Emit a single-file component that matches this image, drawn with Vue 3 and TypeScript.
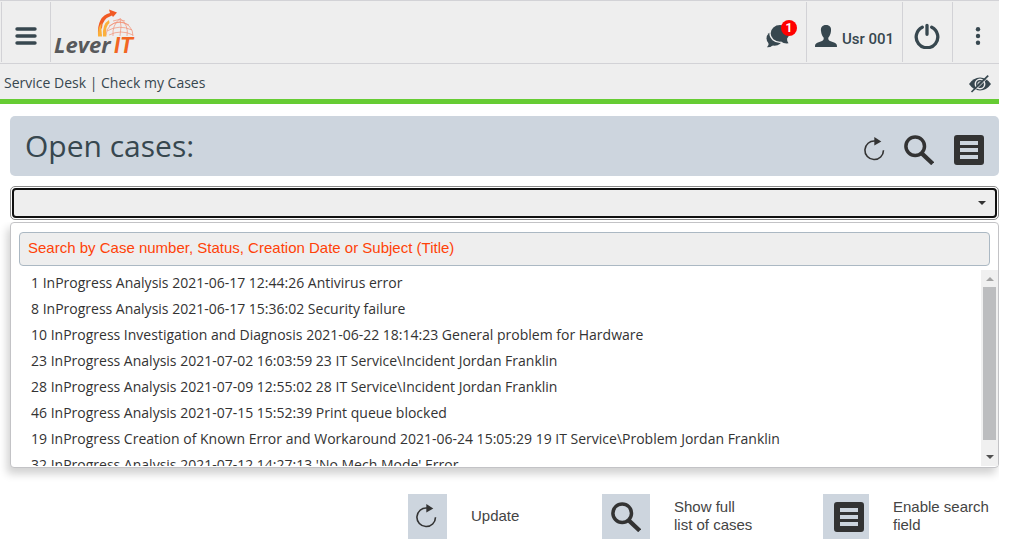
<script setup lang="ts">
import { ref } from 'vue'

interface Case {
  id: number
  text: string
}

const query = ref('')
const selected = ref('')
const cases: Case[] = [
  { id: 1, text: 'InProgress Analysis 2021-06-17 12:44:26 Antivirus error' },
  { id: 8, text: 'InProgress Analysis 2021-06-17 15:36:02 Security failure' },
  { id: 10, text: 'InProgress Investigation and Diagnosis 2021-06-22 18:14:23 General problem for Hardware' },
  { id: 23, text: 'InProgress Analysis 2021-07-02 16:03:59 23 IT Service\\Incident Jordan Franklin' },
  { id: 28, text: 'InProgress Analysis 2021-07-09 12:55:02 28 IT Service\\Incident Jordan Franklin' },
  { id: 46, text: 'InProgress Analysis 2021-07-15 15:52:39 Print queue blocked' },
  { id: 19, text: 'InProgress Creation of Known Error and Workaround 2021-06-24 15:05:29 19 IT Service\\Problem Jordan Franklin' },
  { id: 32, text: "InProgress Analysis 2021-07-12 14:27:13 'No Mech Mode' Error" },
]
</script>

<template>
  <svg class="defs" aria-hidden="true">
    <symbol id="i-refresh" viewBox="0 0 30 30">
      <path d="M24.5 15.3A9.3 9.3 0 1 1 16 6" fill="none" stroke="#333" stroke-width="1.6" />
      <path d="M15.3 2v8.4L22.3 6.4z" fill="#333" />
    </symbol>
    <symbol id="i-search" viewBox="0 0 30 30">
      <circle cx="11.2" cy="11.2" r="9.3" fill="none" stroke="#333" stroke-width="3.5" />
      <path d="M18 18.6L28.7 28.7" stroke="#333" stroke-width="4.2" />
    </symbol>
    <symbol id="i-list" viewBox="0 0 30 30">
      <path fill-rule="evenodd" fill="#333" d="M3 0h24a3 3 0 0 1 3 3v24a3 3 0 0 1-3 3H3a3 3 0 0 1-3-3V3a3 3 0 0 1 3-3zM6 6v4h18V6zM6 13v4h18v-4zM6 20v4h18v-4z" />
    </symbol>
  </svg>

  <div class="page">
    <header class="top">
      <button class="cell menu" aria-label="Menu">
        <svg width="22" height="18" viewBox="0 0 22 18"><path d="M2 2h18M2 9h18M2 16h18" stroke="#37474f" stroke-width="3.4" stroke-linecap="round" /></svg>
      </button>
      <a class="logo" href="#" aria-label="LeverIT">
        <svg width="90" height="54" viewBox="0 0 90 54">
          <g fill="none" stroke="#f28f74" stroke-width="0.7">
            <path d="M53 27A13.500 13.500 0 1 1 80 28M54 23Q66 16 79 22M56 18Q66 11 76 17M60 13Q66 10 72 13" />
            <path d="M60 28Q59 17 67 10.500M67 28Q69 18 67 10.500M74 28Q76 17 67 10.500M56 27Q68 21 80 27" />
          </g>
          <path d="M45 27.500Q44 8 57 5l-1-3.500L64 4.500 60 9 59 7.500Q49 11 49 20L47 22 48.500 27.500z" fill="#f15a24" />
          <path d="M45 28.500Q44.500 20 48.500 15 48 21 49 28.500z" fill="#fbb03b" />
          <path d="M50 28.500Q49 16 56 12l.5 3Q51.500 19 53.500 28.500z" fill="#fbb03b" />
          <text x="1" y="45" class="lever">Lever</text>
          <text x="61" y="45" class="it">IT</text>
        </svg>
      </a>
      <span class="spacer"></span>
      <button class="cell chat" aria-label="Messages">
        <svg width="26" height="24" viewBox="0 0 26 24" fill="#37474f">
          <ellipse cx="8.500" cy="14.500" rx="8" ry="7.300" />
          <path d="M3 17Q3 21 1 23.300 5 23.500 8 20.500z" />
          <ellipse cx="14" cy="9.300" rx="10" ry="9" stroke="#eee" stroke-width="1.300" />
          <path d="M15 17.500Q18 20 22.500 19.300 20.800 17.500 21 14z" />
        </svg>
        <span class="badge">1</span>
      </button>
      <button class="cell user">
        <svg width="22" height="22" viewBox="0 0 22 22" fill="#37474f"><path d="M11 0C14.800 0 16.500 2.400 16 6c-.3 3.400-1.500 5.200-2.600 6.600-.5 2 .4 2.800 1.600 3.400l4.700 1.800C21.500 18.600 22 19.500 22 22H0c0-2.500.5-3.400 2.300-4.200L7 16c1.200-.6 2.100-1.400 1.600-3.400C7.500 11.200 6.300 9.400 6 6 5.500 2.400 7.200 0 11 0z" /></svg>
        <span>Usr 001</span>
      </button>
      <button class="cell power" aria-label="Log out">
        <svg width="26" height="26" viewBox="0 0 26 26" fill="none" stroke="#37474f" stroke-width="3.300" stroke-linecap="round"><path d="M8.300 4.200A10.800 10.800 0 1 0 17.700 4.200M13 2.300v9" /></svg>
      </button>
      <button class="cell more" aria-label="More">
        <svg width="6" height="18" viewBox="0 0 6 18" fill="#37474f"><circle cx="3" cy="2.300" r="2.200" /><circle cx="3" cy="9" r="2.200" /><circle cx="3" cy="15.700" r="2.200" /></svg>
      </button>
    </header>

    <nav class="crumbs">
      <span>Service Desk | Check my Cases</span>
      <button class="plain" aria-label="Toggle visibility">
        <svg width="22" height="18" viewBox="0 0 22 18">
          <path d="M0 9Q4.500 2.500 11 2.500T22 9Q17.500 15.500 11 15.500T0 9z" fill="#37474f" />
          <circle cx="11" cy="9" r="4.700" fill="none" stroke="#eee" stroke-width="1.500" />
          <path d="M8.800 9.500A2.500 2.500 0 0 1 11.500 6.800" fill="none" stroke="#eee" stroke-width="1" />
          <path d="M3.700 17.600L20.500 1.200" stroke="#eee" stroke-width="1" />
          <path d="M2.500 17L19.200 .7" stroke="#37474f" stroke-width="1.700" />
        </svg>
      </button>
    </nav>

    <main>
      <section class="title">
        <h1>Open cases:</h1>
        <button class="plain" aria-label="Update"><svg class="icon"><use href="#i-refresh" /></svg></button>
        <button class="plain" aria-label="Show full list of cases"><svg class="icon"><use href="#i-search" /></svg></button>
        <button class="plain list-btn" aria-label="Enable search field"><svg class="icon"><use href="#i-list" /></svg></button>
      </section>

      <div class="combo">
        <select v-model="selected" aria-label="Open cases">
          <option value=""></option>
          <option v-for="c in cases" :key="c.id" :value="String(c.id)">{{ c.id }} {{ c.text }}</option>
        </select>
        <svg class="caret" width="8" height="4" viewBox="0 0 8 4"><path d="M0 0h8L4 4z" fill="#333" /></svg>
      </div>

      <div class="drop">
        <input v-model="query" type="text" aria-label="Search cases" placeholder="Search by Case number, Status, Creation Date or Subject (Title)" />
        <div class="scroller">
          <ul role="listbox" aria-label="Cases">
            <li v-for="c in cases" :key="c.id" role="option" @click="selected = String(c.id)">{{ c.id }} {{ c.text }}</li>
          </ul>
          <div class="bar" aria-hidden="true">
            <svg width="8" height="17" viewBox="0 0 8 17"><path d="M0 11h8L4 7z" fill="#a3a3a3" /></svg>
            <div class="track"><div class="thumb"></div></div>
            <svg width="8" height="17" viewBox="0 0 8 17"><path d="M0 6h8L4 10z" fill="#505050" /></svg>
          </div>
        </div>
      </div>
    </main>

    <footer class="legend">
      <div class="item"><span class="tile t1"><svg class="icon"><use href="#i-refresh" /></svg></span><span class="label">Update</span></div>
      <div class="item"><span class="tile t2"><svg class="icon"><use href="#i-search" /></svg></span><span class="label">Show full<br />list of cases</span></div>
      <div class="item"><span class="tile t3"><svg class="icon"><use href="#i-list" /></svg></span><span class="label">Enable search<br />field</span></div>
    </footer>
  </div>
</template>

<style>
body { background: #fff; overflow: hidden; }
</style>

<style scoped>
* { box-sizing: border-box; }
.defs { position: absolute; width: 0; height: 0; }
.page { margin-right: 22px; font: 14px/20px "Open Sans", "Noto Sans", sans-serif; color: #37474f; }
button { font: inherit; color: inherit; background: none; border: 0; padding: 0; }
svg { display: block; flex: none; }
.icon { width: 30px; height: 30px; }
.top { display: flex; height: 64px; padding: 1px 0; background: #eee; border-top: 1px solid #d2d2d6; border-bottom: 1px solid #d2d2d6; }
.cell { display: flex; align-items: center; justify-content: center; padding-top: 7px; border-left: 1px solid #d2d2d6; }
.menu { width: 50px; margin-left: 1px; border-right: 1px solid #d2d2d6; }
.logo { padding: 6px 0 0 2px; }
.lever { font: italic 700 22px "Open Sans", sans-serif; fill: #58595b; }
.it { font: italic 700 22px Roboto, sans-serif; fill: #f26522; }
.spacer { flex: 1; }
.chat { position: relative; width: 54px; border: 0; }
.badge { position: absolute; left: 29px; top: 18px; width: 16px; height: 16px; border-radius: 8px; background: #f00; color: #fff; font: 700 12px/16px Roboto, sans-serif; text-align: center; }
.user { width: 96px; gap: 5px; font: 500 15px/20px Roboto, sans-serif; }
.user span { padding-top: 6px; }
.power { width: 50px; padding-right: 1px; }
.more { width: 47px; padding-left: 3px; }
.crumbs { display: flex; align-items: center; justify-content: space-between; height: 40px; padding: 2px 8px 0 4px; background: #eee; border-bottom: 5px solid #6c3; }
.crumbs button { padding-top: 2px; }
main { padding: 12px 0 0 10px; }
.title { display: flex; align-items: center; height: 60px; padding: 0 15px; border-radius: 5px; background: #cdd5de; }
h1 { flex: 1; margin: 0; font-size: 30px; line-height: 40px; font-weight: 400; }
.title button { margin: 8px 0 0 15px; }
.title .list-btn { margin-left: 20px; }
.combo { position: relative; margin-top: 10px; padding: 1px; height: 34px; border: 1px solid #8c8c8c; border-radius: 5px; background: #fff; }
select { display: block; width: 100%; height: 30px; border: 2px solid #101010; border-radius: 4px; background: #eee; appearance: none; outline: 0; }
.caret { position: absolute; right: 12px; top: 14px; }
.drop { margin-top: 2px; border: 1px solid #c3c3c6; border-radius: 4px; padding: 9px 0 1px; background: #fff; box-shadow: -3px 6px 9px rgba(0, 0, 0, 0.18); clip-path: inset(0 0 -20px -20px); }
input { display: block; width: calc(100% - 16px); height: 34px; margin: 0 8px; padding: 0 9px 4px 8px; border: 1px solid #abb8c3; border-radius: 4px; background: #eee; font: 15px/20px "Liberation Sans", Arial, sans-serif; color: #37474f; outline: 0; }
input::placeholder { color: #ff4208; opacity: 1; }
.scroller { display: flex; height: 196px; margin-top: 4px; }
ul { flex: 1; margin: 0; padding: 0 20px; list-style: none; overflow: auto; scrollbar-width: none; color: #333; }
li { height: 26px; line-height: 26px; white-space: nowrap; }
.bar { display: flex; flex-direction: column; align-items: center; width: 17px; background: #f0f0f0; }
.track { flex: 1; width: 13px; }
.thumb { height: 153px; background: #bcbdbf; }
.legend { display: grid; grid-template-columns: 194px 221px 176px; justify-content: end; margin-top: 26px; font: 15px/18px "Liberation Sans", Arial, sans-serif; color: #444; }
.item { display: flex; align-items: center; gap: 24px; height: 45px; }
.label { padding-bottom: 2px; }
.tile { display: flex; align-items: center; height: 45px; background: #cdd5de; }
.t1 { width: 39px; padding-left: 3px; }
.t2 { width: 48px; padding-left: 9px; }
.t3 { width: 46px; padding-left: 11px; }
</style>
